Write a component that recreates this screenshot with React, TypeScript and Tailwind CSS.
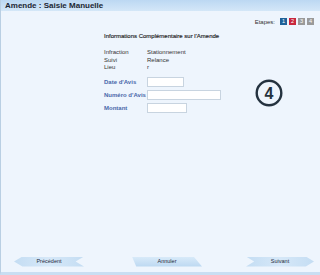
import React from "react";

const font = { fontFamily: '"Liberation Sans", Arial, sans-serif' };

export default function App() {
  return (
    <div
      style={font}
      className="w-[320px] h-[275px] bg-[#eef5fd] flex flex-col border-l border-[#b9cfe3] border-b-[3px] border-b-[#c9def2] text-[#222]"
    >
      <div className="h-[11px] bg-gradient-to-b from-[#bcd8f2] to-[#d4e7f8] flex items-center pl-[4px]">
        <span className="text-[8px] font-bold text-[#1b2633] leading-none">Amende : Saisie Manuelle</span>
      </div>

      <div className="flex justify-end items-center pr-[6px] mt-[6px] h-[9px]">
        <span className="text-[6px] text-[#333] mr-[5px] leading-none">Etapes:</span>
        <span className="w-[7px] h-[7px] bg-[#1f6299] text-white text-[5.5px] leading-[7px] text-center mr-[2px]">1</span>
        <span className="w-[7px] h-[7px] bg-[#c8283e] text-white text-[5.5px] leading-[7px] text-center mr-[2px]">2</span>
        <span className="w-[7px] h-[7px] bg-[#9a9a9a] text-white text-[5.5px] leading-[7px] text-center mr-[2px]">3</span>
        <span className="w-[7px] h-[7px] bg-[#9a9a9a] text-white text-[5.5px] leading-[7px] text-center">4</span>
      </div>

      <div className="pl-[103px] mt-[7px] text-[6px] leading-none">
        <div className="text-[#222] [-webkit-text-stroke:0.15px_#222]">Informations Complémentaire sur l'Amende</div>
        <div className="mt-[10px] grid grid-cols-[43px_auto] gap-y-[1.5px] text-[#333]">
          <span>Infraction</span>
          <span>Stationnement</span>
          <span>Suivi</span>
          <span>Relance</span>
          <span>Lieu</span>
          <span>r</span>
        </div>
      </div>

      <div className="flex items-start mt-[7px]">
        <div className="pl-[103px] flex flex-col gap-[3px] text-[6px] leading-none">
          <div className="flex items-center">
            <span className="w-[43px] text-[#4a68aa] font-semibold">Date d'Avis</span>
            <span className="w-[37px] h-[10px] bg-white border border-[#c8d4e0]" />
          </div>
          <div className="flex items-center">
            <span className="w-[43px] text-[#4a68aa] font-semibold">Numéro d'Avis</span>
            <span className="w-[74px] h-[10px] bg-white border border-[#c8d4e0]" />
          </div>
          <div className="flex items-center">
            <span className="w-[43px] text-[#4a68aa] font-semibold">Montant</span>
            <span className="w-[40px] h-[10px] bg-white border border-[#c8d4e0]" />
          </div>
        </div>
        <div className="ml-[34px] mt-[2px]">
          <svg width="28" height="28" viewBox="0 0 28 28">
            <circle cx="14" cy="14" r="12.3" fill="none" stroke="#24323f" strokeWidth="2.4" />
            <text x="14" y="19.8" textAnchor="middle" fontSize="16" fontWeight="bold" fontFamily="Liberation Sans, Arial, sans-serif" fill="#24323f">4</text>
          </svg>
        </div>
      </div>

      <div className="mt-auto mb-[5px] flex items-center h-[11px] text-[5.5px] text-[#1d2a3a] leading-none">
        <div className="ml-[13px] w-[70px] h-[10px] flex items-center justify-center bg-gradient-to-r from-[#c4ddf3] via-[#d6e8f8] to-[#c4ddf3] [clip-path:polygon(0%_50%,12%_0%,100%_0%,88%_50%,100%_100%,12%_100%)]">
          Précédent
        </div>
        <div className="ml-[48px] w-[70px] h-[10px] flex items-center justify-center bg-gradient-to-b from-[#d8eaf9] to-[#bcd8f1] [clip-path:polygon(0%_0%,88%_0%,100%_100%,6%_100%)]">
          Annuler
        </div>
        <div className="ml-[44px] w-[68px] h-[10px] flex items-center justify-center bg-gradient-to-r from-[#c4ddf3] via-[#d6e8f8] to-[#c4ddf3] [clip-path:polygon(0%_0%,88%_0%,100%_50%,88%_100%,0%_100%,12%_50%)]">
          Suivant
        </div>
      </div>
    </div>
  );
}
